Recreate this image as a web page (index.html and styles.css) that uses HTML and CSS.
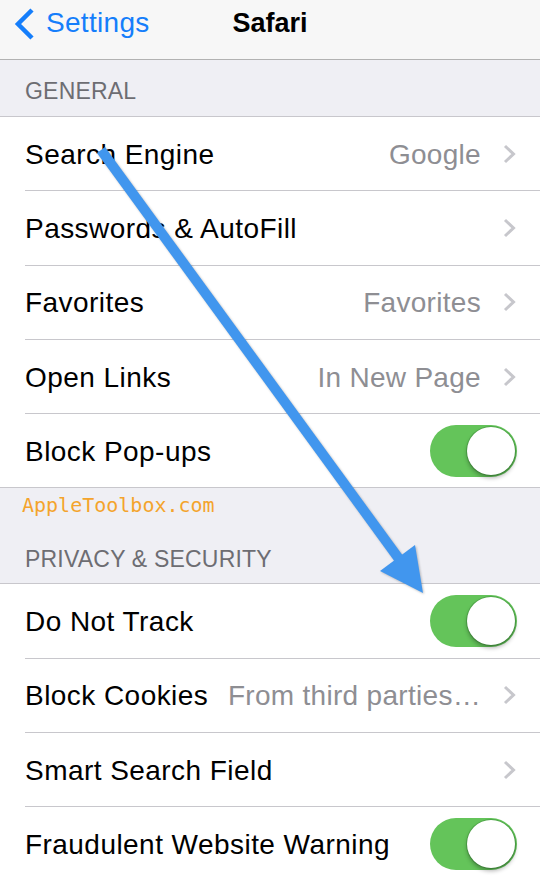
FILE: index.html
```html
<!DOCTYPE html>
<html lang="en">
<head>
    <meta charset="UTF-8">
    <title>Safari</title>
<link rel="stylesheet" href="styles.css">
</head>
<body>
<div class="screen">
    <header class="navbar">
        <a class="back" href="#">
            <svg class="back-icon" width="20" height="32" viewBox="0 0 20 32"><path d="M18 2 L4 16 L18 30" /></svg>
            Settings
        </a>
        <h1 class="title">Safari</h1>
        <span></span>
    </header>

    <div class="group-head">
        <span class="group-title">GENERAL</span>
    </div>
    <ul class="list">
        <li class="row">
            <span class="label">Search Engine</span>
            <span class="value">Google</span>
            <svg class="chevron" width="13" height="20" viewBox="0 0 13 20"><path d="M2 2 L10.5 10 L2 18" /></svg>
        </li>
        <li class="row">
            <span class="label">Passwords &amp; AutoFill</span>
            <span class="value"></span>
            <svg class="chevron" width="13" height="20" viewBox="0 0 13 20"><path d="M2 2 L10.5 10 L2 18" /></svg>
        </li>
        <li class="row">
            <span class="label">Favorites</span>
            <span class="value">Favorites</span>
            <svg class="chevron" width="13" height="20" viewBox="0 0 13 20"><path d="M2 2 L10.5 10 L2 18" /></svg>
        </li>
        <li class="row">
            <span class="label">Open Links</span>
            <span class="value">In New Page</span>
            <svg class="chevron" width="13" height="20" viewBox="0 0 13 20"><path d="M2 2 L10.5 10 L2 18" /></svg>
        </li>
        <li class="row row-switch">
            <span class="label">Block Pop-ups</span>
            <span class="switch"><span class="knob"></span></span>
        </li>
    </ul>

    <div class="group-head group-head-tall">
        <span class="watermark">AppleToolbox.com</span>
        <span class="group-title">PRIVACY &amp; SECURITY</span>
    </div>
    <ul class="list">
        <li class="row row-switch">
            <span class="label">Do Not Track</span>
            <span class="switch"><span class="knob"></span></span>
        </li>
        <li class="row">
            <span class="label">Block Cookies</span>
            <span class="value">From third parties…</span>
            <svg class="chevron" width="13" height="20" viewBox="0 0 13 20"><path d="M2 2 L10.5 10 L2 18" /></svg>
        </li>
        <li class="row">
            <span class="label">Smart Search Field</span>
            <span class="value"></span>
            <svg class="chevron" width="13" height="20" viewBox="0 0 13 20"><path d="M2 2 L10.5 10 L2 18" /></svg>
        </li>
        <li class="row row-switch">
            <span class="label">Fraudulent Website Warning</span>
            <span class="switch"><span class="knob"></span></span>
        </li>
    </ul>

    <!-- annotation arrow drawn over the screenshot -->
    <svg class="arrow" width="540" height="881" viewBox="0 0 540 881">
        <line x1="101" y1="150" x2="402" y2="563" />
        <polygon points="423,593 380,571 415,545" />
    </svg>
</div>
</body>
</html>
```

FILE: styles.css
```css
body{
    margin: 0;
    background-color: #efeff4;
    font-family: "Liberation Sans", Arial, sans-serif;
}
.screen{
    position: relative;
    width: 540px;
    height: 881px;
    overflow: hidden;
}
.navbar{
    display: grid;
    grid-template-columns: 1fr auto 1fr;
    align-items: start;
    height: 60px;
    padding-top: 6px;
    box-sizing: border-box;
    background-color: #f7f7f7;
    border-bottom: 1px solid #b2b2b2;
}
.back{
    display: flex;
    align-items: center;
    gap: 12px;
    padding-left: 14px;
    color: #157efb;
    font-size: 28px;
    line-height: 34px;
    letter-spacing: 0.3px;
    text-decoration: none;
}
.back-icon{
    margin-top: 1px;
}
.back-icon path{
    fill: none;
    stroke: #157efb;
    stroke-width: 4.5;
}
.title{
    margin: 0;
    font-size: 27px;
    line-height: 34px;
    font-weight: bold;
    color: #000;
}
.group-head{
    display: flex;
    flex-direction: column;
    justify-content: flex-end;
    height: 56px;
    padding: 0 25px 12px;
    box-sizing: border-box;
}
.group-head-tall{
    justify-content: space-between;
    height: 95px;
    padding-top: 5px;
    padding-bottom: 11px;
}
.group-title{
    font-size: 23px;
    line-height: 26px;
    letter-spacing: 0.2px;
    color: #6d6d72;
}
.watermark{
    margin-left: -3px;
    font-family: "DejaVu Sans Mono", "Liberation Mono", monospace;
    font-size: 20px;
    line-height: 24px;
    color: #f4a42c;
}
.list{
    margin: 0;
    padding: 0 0 0 25px;
    list-style: none;
    background-color: #fff;
    border-top: 1px solid #c8c7cc;
    border-bottom: 1px solid #c8c7cc;
}
.row{
    display: flex;
    align-items: center;
    gap: 12px;
    height: 73.3px;
    padding-right: 24px;
    border-bottom: 1px solid #c8c7cc;
}
.row:last-child{
    border-bottom: none;
}
.row-switch{
    padding-right: 23px;
}
.label{
    padding-top: 2px;
    font-size: 28px;
    letter-spacing: 0.45px;
    color: #000;
    white-space: nowrap;
}
.value{
    margin-left: auto;
    margin-right: 10px;
    padding-top: 2px;
    font-size: 28px;
    letter-spacing: 0.3px;
    color: #8e8e93;
    white-space: nowrap;
}
.chevron path{
    fill: none;
    stroke: #c7c7cc;
    stroke-width: 3;
}
.switch{
    display: flex;
    justify-content: flex-end;
    align-items: center;
    margin-left: auto;
    width: 87px;
    height: 52px;
    padding: 2px;
    box-sizing: border-box;
    border-radius: 26px;
    background-color: #64c45a;
}
.knob{
    width: 48px;
    height: 48px;
    border-radius: 50%;
    background-color: #fff;
    box-shadow: 0 3px 4px rgba(0, 0, 0, 0.3), 0 0 0 1px rgba(40, 120, 40, 0.35);
}
.arrow{
    position: absolute;
    top: 0;
    left: 0;
    pointer-events: none;
    filter: drop-shadow(1px 1px 1px rgba(0, 0, 0, 0.25));
}
.arrow line{
    stroke: #4196ee;
    stroke-width: 10;
}
.arrow polygon{
    fill: #4196ee;
}
```
